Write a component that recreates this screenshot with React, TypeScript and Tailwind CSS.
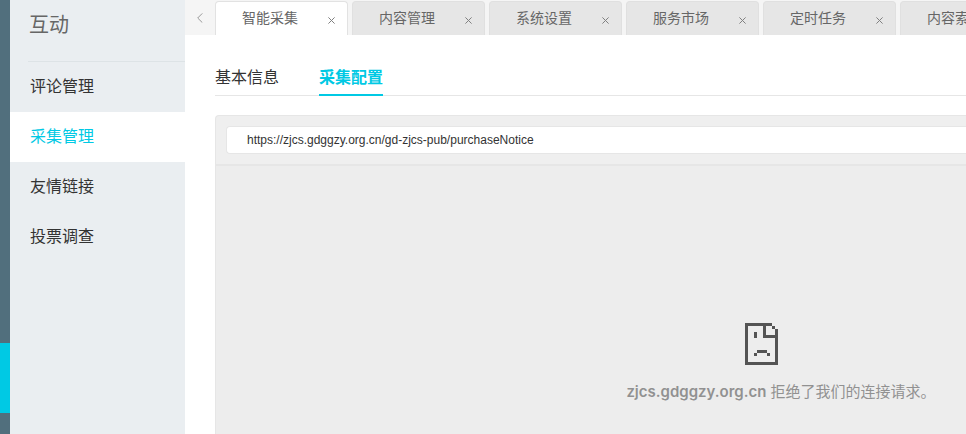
import { useState } from "react";

const menuItems = ["评论管理", "采集管理", "友情链接", "投票调查"];
const pageTabs = [
  "智能采集",
  "内容管理",
  "系统设置",
  "服务市场",
  "定时任务",
  "内容索引",
];
const sections = ["基本信息", "采集配置"];

function SadPage() {
  return (
    <svg
      className="w-[33px] h-[42px]"
      viewBox="0 0 33 42"
      fill="#545454"
      shapeRendering="crispEdges"
      aria-hidden="true"
    >
      <path d="M0 0h27v3H0zM0 0h3v42H0zM0 39h33v3H0zM30 6h3v36h-3zM27 3h3v3h-3z" />
      <path d="M18 0h3v15h-3zM18 12h15v3H18z" />
      <path d="M9 9h3v6H9zM12 27h10v3H12zM9 30h3v3H9zM22 30h3v3h-3z" />
    </svg>
  );
}

export default function App() {
  const [menu, setMenu] = useState("采集管理");
  const [tabs, setTabs] = useState(pageTabs);
  const [tab, setTab] = useState("智能采集");
  const [section, setSection] = useState("采集配置");
  const [url, setUrl] = useState(
    "https://zjcs.gdggzy.org.cn/gd-zjcs-pub/purchaseNotice"
  );

  return (
    <div className="flex min-h-screen bg-white text-[#333] font-['Liberation_Sans','Noto_Sans_CJK_SC',sans-serif]">
      <div className="w-2.5 shrink-0 bg-[#516f7d] pt-[343px]">
        <div className="h-[70px] bg-[#00c9e4]"></div>
      </div>

      <aside className="w-[175px] shrink-0 bg-[#eaeef1]">
        <h1 className="ml-[18px] h-[62px] pt-[11px] pl-px border-b border-[#dde3e6] text-xl leading-7 text-[#666]">
          互动
        </h1>
        <nav>
          {menuItems.map((item) => (
            <button
              key={item}
              className={`block w-full h-[50px] pl-5 pb-px text-left text-base ${
                item === menu ? "bg-white text-[#00c9e4]" : ""
              }`}
              onClick={() => setMenu(item)}
            >
              {item}
            </button>
          ))}
        </nav>
      </aside>

      <main className="flex flex-col flex-1 min-w-0 overflow-hidden">
        <div className="flex h-[35px] shrink-0 bg-[#f5f5f5]">
          <button
            className="w-[30px] shrink-0 flex items-center justify-center text-[#999]"
            aria-label="向左"
          >
            <svg
              className="w-1.5 h-2.5"
              viewBox="0 0 6 10"
              fill="none"
              stroke="currentColor"
            >
              <path d="M5.3 0.4L0.7 5l4.6 4.6" />
            </svg>
          </button>
          <div className="flex flex-1 gap-1 pt-px overflow-hidden">
            {tabs.map((name) => (
              <div
                key={name}
                className={`flex w-[133px] shrink-0 rounded-t border border-b-0 ${
                  name === tab
                    ? "bg-white border-[#e2e2e2]"
                    : "bg-[#e6e6e6] border-[#e0e0e0]"
                }`}
              >
                <button
                  className="flex-1 pl-[26px] pb-px text-left text-sm text-[#666] whitespace-nowrap"
                  onClick={() => setTab(name)}
                >
                  {name}
                </button>
                <button
                  className="w-8 pt-1 flex items-center justify-center text-[#808080]"
                  aria-label={`关闭${name}`}
                  onClick={() => setTabs(tabs.filter((t) => t !== name))}
                >
                  <svg
                    className="w-[7px] h-[7px]"
                    viewBox="0 0 7 7"
                    fill="none"
                    stroke="currentColor"
                  >
                    <path d="M0.4 0.4l6.2 6.2M6.6 0.4L0.4 6.6" />
                  </svg>
                </button>
              </div>
            ))}
          </div>
        </div>

        <div className="flex flex-col flex-1 pl-[30px] pt-6">
          <div className="flex gap-10 border-b border-[#e6e6e6]">
            {sections.map((name) => (
              <button
                key={name}
                className={`h-[37px] -mb-px pt-0.5 border-b-2 text-base ${
                  name === section
                    ? "border-[#00c9e4] text-[#00c9e4] font-bold"
                    : "border-transparent"
                }`}
                onClick={() => setSection(name)}
              >
                {name}
              </button>
            ))}
          </div>

          <div className="flex flex-col flex-1 mt-[19px] rounded-tl border border-r-0 border-b-0 border-[#e6e6e6] bg-[#ededed]">
            <div className="pl-2.5 py-2.5 border-b-2 border-[#e6e6e6] bg-[#efefef] rounded-tl">
              <input
                className="block w-full h-7 pl-5 rounded-l border border-r-0 border-[#e6e6e6] bg-white text-xs text-[#333] focus:outline-none"
                aria-label="采集地址"
                value={url}
                onChange={(e) => setUrl(e.target.value)}
              />
            </div>
            <div className="flex flex-col items-center pl-[340px] pt-[157px]">
              <SadPage />
              <p className="mt-4 pl-10 font-[Inter,'Noto_Sans_CJK_SC',sans-serif] text-[15px] leading-[22px] text-[#919191] whitespace-nowrap">
                <strong className="font-semibold">zjcs.gdggzy.org.cn</strong>{" "}
                拒绝了我们的连接请求。
              </p>
            </div>
          </div>
        </div>
      </main>
    </div>
  );
}
